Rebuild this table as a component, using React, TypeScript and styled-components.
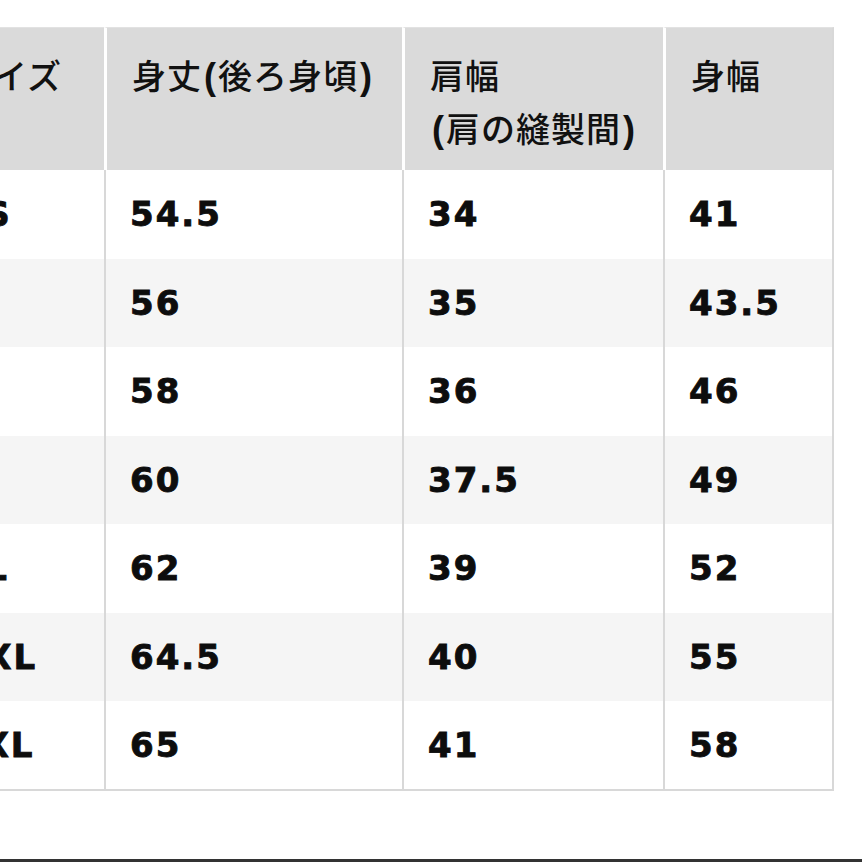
import React from "react";
import styled, { createGlobalStyle } from "styled-components";

const GlobalStyle = createGlobalStyle`
  html, body {
    margin: 0;
    padding: 0;
    background: #fff;
  }
  body {
    font-family: "Liberation Sans", "Noto Sans CJK JP", sans-serif;
    color: #111;
    overflow: hidden;
  }
`;

const Page = styled.div`
  width: 862px;
  height: 862px;
  padding-top: 27px;
  box-sizing: border-box;
  overflow: hidden;
`;

const Table = styled.table`
  margin-left: -67px;
  border-collapse: separate;
  border-spacing: 0;
  table-layout: fixed;
  width: 901px;
`;

const HeadCell = styled.th`
  box-sizing: border-box;
  background: #dadada;
  text-align: left;
  vertical-align: top;
  padding: 20px 16px 0 25px;
  height: 143px;
  font-family: "Noto Sans CJK JP", sans-serif;
  font-weight: 500;
  font-size: 34px;
  line-height: 53px;
  letter-spacing: 1px;
  color: #111;
  border-top: 1px solid #e2e2e2;
  border-left: 3px solid #fff;

  &:first-child {
    border-left: none;
  }
  &:last-child {
    border-right: 2px solid #d8d8d8;
  }
`;

const Paren = styled.span`
  font-family: "Liberation Sans", sans-serif;
  font-weight: 700;
  font-size: 36px;
  line-height: 0;
  letter-spacing: 0;
  margin: 0 2px;
`;

const Row = styled.tr<{ $shade: boolean }>`
  background: ${(p) => (p.$shade ? "#f5f5f5" : "#fff")};
`;

const Cell = styled.td<{ $last: boolean }>`
  box-sizing: border-box;
  height: ${(p) => (p.$last ? "90px" : "88.5px")};
  padding: 0 10px 0 24px;
  vertical-align: middle;
  font-family: "DejaVu Sans", sans-serif;
  font-weight: 700;
  font-size: 34px;
  line-height: 40px;
  letter-spacing: 2px;
  color: #0d0d0d;
  -webkit-text-stroke: 0.9px #0d0d0d;
  border-left: 2px solid #d8d8d8;
  border-bottom: ${(p) => (p.$last ? "2px solid #d8d8d8" : "none")};

  &:first-child {
    border-left: none;
  }
  &:last-child {
    border-right: 2px solid #d8d8d8;
  }
`;

const Rule = styled.div`
  margin-top: 68px;
  border-top: 3px solid #333;
`;

const sizes = [
  ["XS", "54.5", "34", "41"],
  ["S", "56", "35", "43.5"],
  ["M", "58", "36", "46"],
  ["L", "60", "37.5", "49"],
  ["XL", "62", "39", "52"],
  ["XXL", "64.5", "40", "55"],
  ["3XL", "65", "41", "58"],
];

const App: React.FC = () => {
  return (
    <>
      <GlobalStyle />
      <Page>
        <Table>
          <colgroup>
            <col style={{ width: "171px" }} />
            <col style={{ width: "298px" }} />
            <col style={{ width: "261px" }} />
            <col style={{ width: "171px" }} />
          </colgroup>
          <thead>
            <tr>
              <HeadCell>サイズ</HeadCell>
              <HeadCell>
                身丈<Paren>(</Paren>後ろ身頃<Paren>)</Paren>
              </HeadCell>
              <HeadCell>
                肩幅
                <br />
                <Paren>(</Paren>肩の縫製間<Paren>)</Paren>
              </HeadCell>
              <HeadCell>身幅</HeadCell>
            </tr>
          </thead>
          <tbody>
            {sizes.map((row, i) => (
              <Row key={row[0]} $shade={i % 2 === 1}>
                {row.map((v, j) => (
                  <Cell key={j} $last={i === sizes.length - 1}>
                    {v}
                  </Cell>
                ))}
              </Row>
            ))}
          </tbody>
        </Table>
        <Rule />
      </Page>
    </>
  );
};

export default App;
